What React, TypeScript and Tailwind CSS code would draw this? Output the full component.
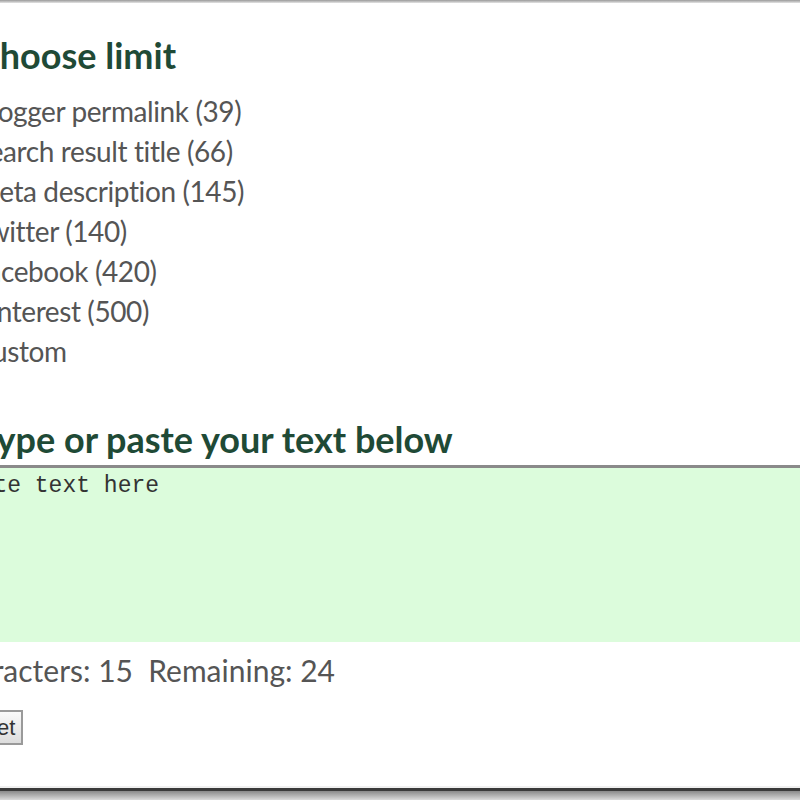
const limits = [
  "Blogger permalink (39)",
  "Search result title (66)",
  "Meta description (145)",
  "Twitter (140)",
  "Facebook (420)",
  "Pinterest (500)",
  "Custom",
];

export default function App() {
  return (
    <div className="w-[800px] h-[800px] overflow-hidden bg-white flex flex-col font-['Lato','Liberation_Sans',sans-serif]">
      <div className="h-[3px] bg-gradient-to-b from-[#9a9a9a] to-[#e4e4e4]" />
      <div className="flex-1 flex flex-col -ml-[26px]">
        <h2 className="mt-[34px] ml-[2px] text-[36px] leading-[36px] font-bold text-[#1f4a36]">Choose limit</h2>
        <ul className="mt-[18px] flex flex-col">
          {limits.map((l) => (
            <li key={l} className="h-[40px] leading-[40px] text-[28px] tracking-[-0.4px] text-[#555]">
              {l}
            </li>
          ))}
        </ul>
        <h2 className="mt-[50px] ml-[4px] text-[36px] leading-[36px] font-bold text-[#1f4a36]">Type or paste your text below</h2>
        <textarea
          className="mt-[8px] -ml-[22px] w-[858px] h-[177px] resize-none bg-[#dcfcdc] border-t-[3px] border-[#8a8a8a] px-[0px] py-[6px] font-['Liberation_Mono',monospace] text-[23px] leading-[24px] text-[#333] outline-none"
          defaultValue="Paste text here"
        />
        <p className="mt-[8px] -ml-[33px] text-[30px] leading-[40px] text-[#555]">
          Characters: 15&nbsp; Remaining: 24
        </p>
        <div className="mt-[20px] -ml-[24px]">
          <button className="h-[35px] px-[6px] border-2 border-[#9a9a9a] bg-gradient-to-b from-[#fafafa] to-[#dddddd] font-['Liberation_Sans',sans-serif] text-[22px] leading-[28px] text-[#333]">
            Reset
          </button>
        </div>
      </div>
      <div className="h-[2px] bg-[#f0f0f0]" />
      <div className="h-[3px] bg-[#3a3a3a]" />
      <div className="h-[9px] bg-gradient-to-b from-[#8a8a8a] to-[#dadada]" />
    </div>
  );
}
